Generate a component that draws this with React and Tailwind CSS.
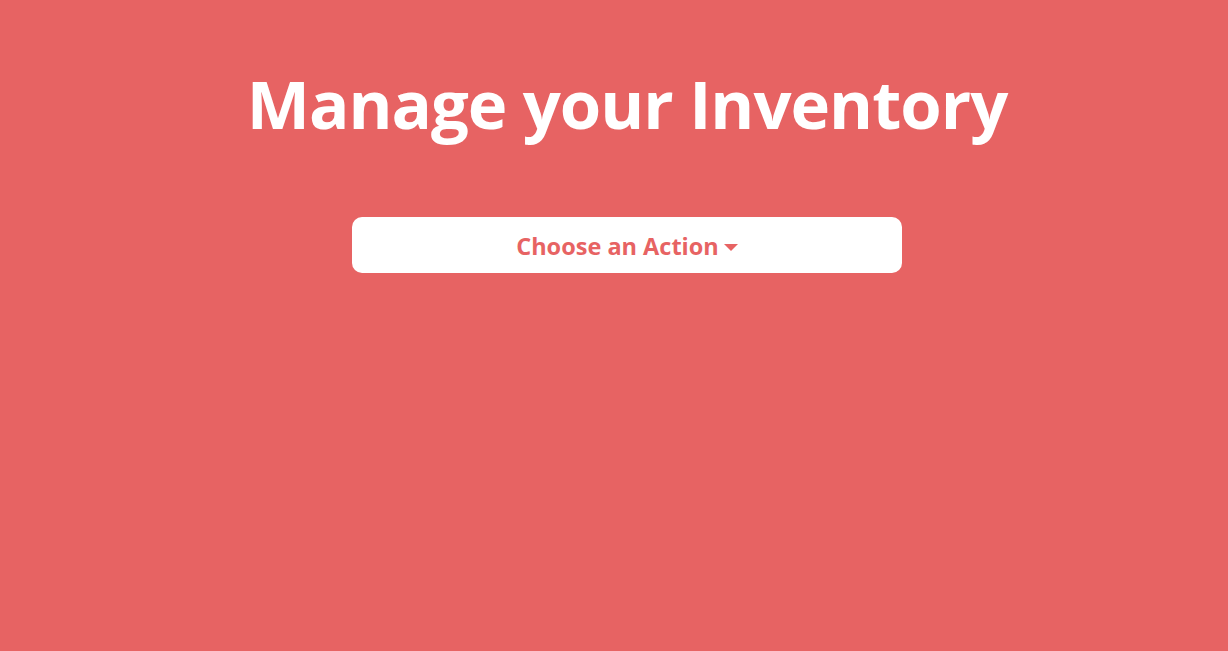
export default function App() {
  return (
    <div className="min-h-screen w-full bg-[#e76363] pl-[26px] font-['Open_Sans',sans-serif]">
      <div className="flex flex-col items-center pt-[63px]">
        <h1 className="text-[67px] leading-[1.2] font-bold text-white tracking-[-1px]">
          Manage your Inventory
        </h1>
        <button className="mt-[74px] flex h-[56px] w-[550px] items-center justify-center rounded-[10px] bg-white pt-[2px] text-[23.5px] font-bold text-[#e76363]">
          Choose an Action
          <span className="ml-[5px] mt-[3px] inline-block border-x-[7px] border-t-[7px] border-x-transparent border-t-[#e76363]" />
        </button>
      </div>
    </div>
  )
}
